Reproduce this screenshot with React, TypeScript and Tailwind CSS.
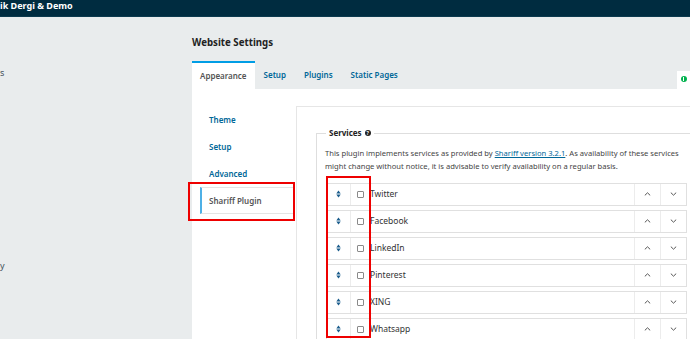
import React from "react";

const services = ["Twitter", "Facebook", "LinkedIn", "Pinterest", "XING", "Whatsapp"];

const SortIcon = () => (
  <svg width="5" height="8" viewBox="0 0 5 8">
    <path d="M0.3 3.4 L2.5 0.6 L4.7 3.4 Z" fill="#1a5c8c" />
    <path d="M0.3 4.6 L4.7 4.6 L2.5 7.4 Z" fill="#1a5c8c" />
  </svg>
);

const Chevron = ({ up }: { up?: boolean }) => (
  <svg width="7" height="4" viewBox="0 0 7 4">
    <polyline
      points={up ? "0.8,3.4 3.5,0.8 6.2,3.4" : "0.8,0.6 3.5,3.2 6.2,0.6"}
      fill="none"
      stroke="#555"
      strokeWidth="1"
    />
  </svg>
);

const ServiceRow = ({ name }: { name: string }) => (
  <div className="flex h-[23px] mb-[4px] border border-[#e0e0e0] bg-white">
    <div className="w-[24px] flex items-center justify-center border-r border-[#ececec]">
      <SortIcon />
    </div>
    <div className="w-[19px] flex items-center justify-center">
      <span className="block w-[7px] h-[7px] rounded-[1px] border border-[#8a8a8a] bg-white" />
    </div>
    <div className="flex-1 flex items-center text-[8.5px] text-[#333]">{name}</div>
    <div className="w-[26px] flex items-center justify-center border-l border-[#ececec]">
      <Chevron up />
    </div>
    <div className="w-[26px] flex items-center justify-center border-l border-[#ececec]">
      <Chevron />
    </div>
  </div>
);

const navItems = ["Theme", "Setup", "Advanced"];

export default function App() {
  return (
    <div className="relative w-[690px] h-[339px] overflow-hidden bg-[#e9eced] font-['Noto_Sans',sans-serif] text-[#222]">
      <header className="h-[17px] bg-[#002c40] border-b border-[#0c3a4e]">
        <div className="text-[9px] leading-[11px] font-bold text-white whitespace-nowrap">
          ik Dergi &amp; Demo
        </div>
      </header>

      <div className="flex h-[322px]">
        <aside className="w-[192px] shrink-0 text-[9px] leading-[12px] text-[#44515b]">
          <div className="mt-[50px]">s</div>
          <div className="mt-[181px]">y</div>
        </aside>

        <main className="flex-1 min-w-0 flex flex-col">
          <h1 className="mt-[19px] text-[9.7px] leading-[14px] font-bold text-[#222]">Website Settings</h1>

          <div className="mt-[11px] flex items-end h-[28px] text-[8px] font-semibold">
            <div className="h-[28px] px-2 flex items-center bg-white border-t-2 border-[#009de5] text-[#555]">
              Appearance
            </div>
            <div className="h-[28px] px-[9px] flex items-center text-[#006798]">Setup</div>
            <div className="h-[28px] px-[9px] flex items-center text-[#006798]">Plugins</div>
            <div className="h-[28px] px-[9px] flex items-center text-[#006798]">Static Pages</div>
            <div className="ml-auto w-[13px] h-[18px] bg-white flex justify-center pt-[5px]">
              <span className="w-[6px] h-[6px] rounded-full bg-[#00b24e] flex items-center justify-center">
                <span className="w-px h-[4px] bg-white" />
              </span>
            </div>
          </div>

          <div className="flex-1 bg-white flex min-h-0">
            <nav className="w-[104px] shrink-0 pt-[17px] text-[8px] font-semibold">
              {navItems.map((item) => (
                <div
                  key={item}
                  className="ml-2 w-[94px] h-[27px] flex items-center pl-[7px] border-l-2 border-transparent text-[#006798]"
                >
                  {item}
                </div>
              ))}
              <div className="ml-2 w-[94px] h-[27px] flex items-center pl-[7px] border-l-2 border-l-[#4eb0e6] border-y border-y-[#e4e4e4] text-[#555]">
                Shariff Plugin
              </div>
            </nav>

            <section className="flex-1 min-w-0 mt-[17px] border-l border-t border-[#e6e6e6] overflow-hidden pt-[20px] pl-[19px]">
              <fieldset className="w-[380px] border border-[#dedede] pl-[9px] pr-[9px]">
                <legend className="px-[3px] text-[8px] leading-[12px] font-bold text-[#222] flex items-center gap-[3px]">
                  Services
                  <span className="w-[6px] h-[6px] rounded-full bg-[#222] text-white text-[5px] leading-[6px] text-center font-bold">
                    ?
                  </span>
                </legend>
                <p className="mt-[8px] -ml-px w-[362px] text-[7.6px] leading-[13px] text-[#444]">
                  This plugin implements services as provided by{" "}
                  <span className="text-[#006798] underline">Shariff version 3.2.1</span>. As availability of these
                  services might change without notice, it is advisable to verify availability on a regular basis.
                </p>
                <div className="mt-[9.5px]">
                  {services.map((s) => (
                    <ServiceRow key={s} name={s} />
                  ))}
                </div>
              </fieldset>
            </section>
          </div>
        </main>
      </div>

      {/* annotation boxes */}
      <div className="absolute left-[188px] top-[182px] w-[107px] h-[39px] border-2 border-[#ee0000]" />
      <div className="absolute left-[326px] top-[176px] w-[45px] h-[162px] border-2 border-[#ee0000]" />
    </div>
  );
}
